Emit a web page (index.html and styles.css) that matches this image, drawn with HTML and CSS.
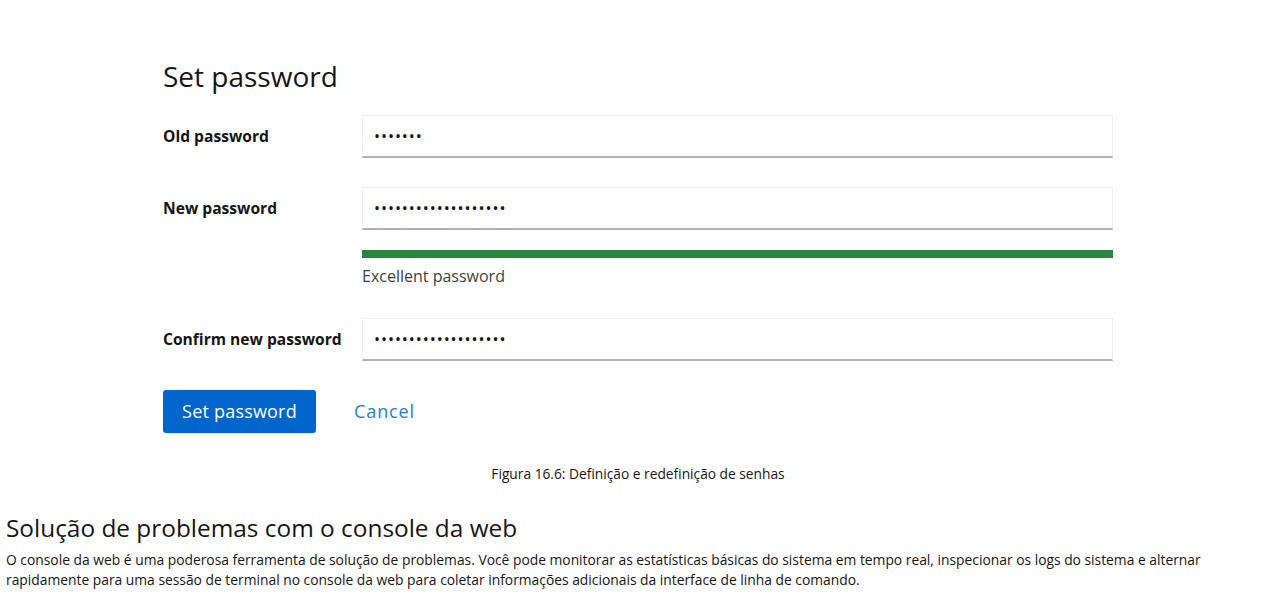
FILE: index.html
```html
<!DOCTYPE html>
<html lang="pt">
<head>
<meta charset="utf-8">
<title>Solução de problemas com o console da web</title>
<link rel="stylesheet" href="styles.css">
</head>
<body>
<figure class="figure">
  <div class="shot">
    <h1 class="shot-title">Set password</h1>
    <div class="form">
      <div class="row">
        <label class="label">Old password</label>
        <div class="control"><div class="input">•••••••</div></div>
      </div>
      <div class="row">
        <label class="label">New password</label>
        <div class="control">
          <div class="input">•••••••••••••••••••</div>
          <div class="meter"></div>
          <div class="meter-text">Excellent password</div>
        </div>
      </div>
      <div class="row">
        <label class="label">Confirm new password</label>
        <div class="control"><div class="input">•••••••••••••••••••</div></div>
      </div>
      <div class="actions">
        <button class="btn-primary">Set password</button>
        <button class="btn-link">Cancel</button>
      </div>
    </div>
  </div>
  <figcaption class="caption">Figura 16.6: Definição e redefinição de senhas</figcaption>
</figure>
<section class="section">
  <h2 class="section-title">Solução de problemas com o console da web</h2>
  <p class="para">O console da web é uma poderosa ferramenta de solução de problemas. Você pode monitorar as estatísticas básicas do sistema em tempo real, inspecionar os logs do sistema e alternar rapidamente para uma sessão de terminal no console da web para coletar informações adicionais da interface de linha de comando.</p>
</section>
</body>
</html>
```
FILE: styles.css
```css
html, body {
  margin: 0;
  padding: 0;
  background: #ffffff;
}
body {
  font-family: "Open Sans", "Noto Sans", sans-serif;
  color: #151515;
}
.figure {
  margin: 0;
  padding: 0;
}
.shot {
  padding: 57px 0 0 163px;
  width: 950px;
}
.shot-title {
  margin: 0;
  font-family: "Open Sans", sans-serif;
  font-weight: 400;
  font-size: 28px;
  line-height: 38px;
  color: #151515;
}
.form {
  margin-top: 20px;
  display: flex;
  flex-direction: column;
  gap: 29px;
}
.row {
  display: flex;
  align-items: flex-start;
}
.label {
  width: 199px;
  flex: none;
  font-size: 15.6px;
  font-weight: 700;
  line-height: 43px;
  color: #151515;
}
.control {
  width: 751px;
  display: flex;
  flex-direction: column;
}
.input {
  height: 43px;
  box-sizing: border-box;
  border: 1px solid #f0f0f0;
  border-bottom: 2px solid #b0b0b0;
  padding: 0 11px;
  font-size: 16px;
  line-height: 41px;
  letter-spacing: 0.95px;
  color: #151515;
}
.meter {
  margin-top: 20px;
  height: 8px;
  background: #28873d;
}
.meter-text {
  margin-top: 7px;
  margin-bottom: 2px;
  font-size: 16px;
  line-height: 22px;
  color: #3c3f42;
}
.actions {
  display: flex;
  align-items: center;
  gap: 22px;
}
.btn-primary {
  height: 43px;
  width: 153px;
  border: 0;
  border-radius: 3px;
  background: #0066cc;
  color: #ffffff;
  font-family: "Open Sans", sans-serif;
  font-size: 18px;
  letter-spacing: 0.2px;
  padding: 0 0 2px;
}
.btn-link {
  border: 0;
  background: none;
  color: #1f7fd1;
  font-family: "Open Sans", sans-serif;
  font-size: 18px;
  letter-spacing: 0.9px;
  padding: 0 16px 2px;
}
.caption {
  margin-top: 31px;
  padding-left: 12px;
  text-align: center;
  font-size: 13.75px;
  line-height: 20px;
  color: #151515;
}
.section {
  padding: 0 6px;
  margin-top: 28px;
}
.section-title {
  margin: 0;
  font-weight: 400;
  font-size: 24.4px;
  line-height: 32px;
  color: #151515;
}
.para {
  margin: 6px 0 0;
  font-size: 13.84px;
  line-height: 20px;
  color: #151515;
}
```
